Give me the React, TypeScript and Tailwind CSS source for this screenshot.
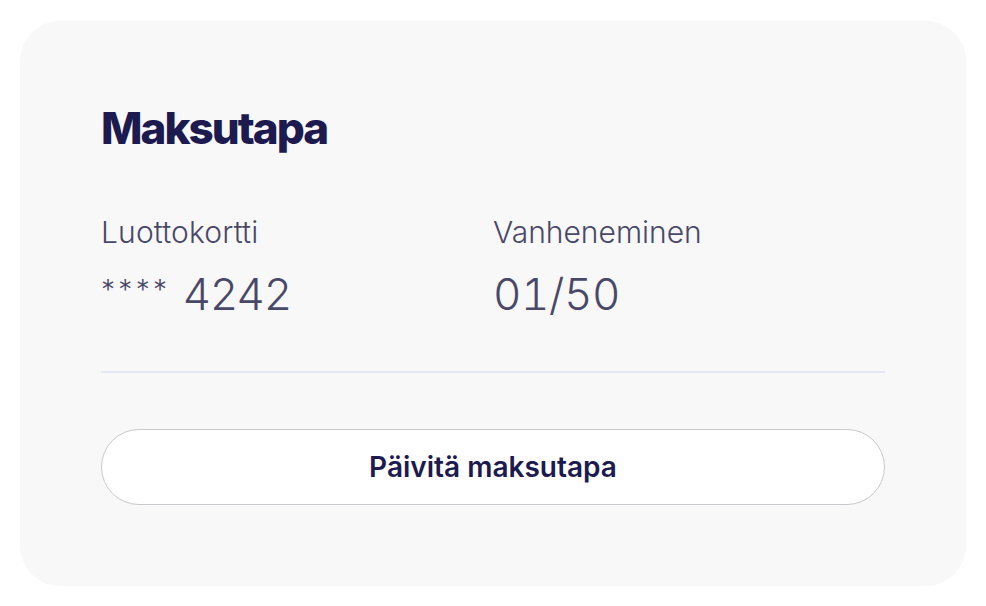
export default function App() {
  return (
    <div className="min-h-screen bg-white pl-[20px] pt-[21px]" style={{ fontFamily: 'Inter, "Noto Sans", sans-serif' }}>
      <section className="w-[946px] rounded-[40px] bg-[#f8f8f8] px-[81px] pt-[81px] pb-[81px]">
        <h2 className="text-[44px] font-extrabold leading-[53px] tracking-[-0.045em] text-[#1c1a4f]">Maksutapa</h2>

        <div className="mt-[59px] grid grid-cols-2 text-[#4a4868]">
          <div>
            <div className="text-[30px] font-light leading-[36px] tracking-[0.005em]">Luottokortti</div>
            <div className="mt-[18px] text-[44px] font-light leading-[53px]">
              <span className="align-[10px] text-[28px] leading-none tracking-[0.12em]">****</span> 4242
            </div>
          </div>
          <div>
            <div className="text-[30px] font-light leading-[36px]">Vanheneminen</div>
            <div className="mt-[18px] text-[44px] font-light leading-[53px] tabular-nums tracking-[-0.01em]">01/50</div>
          </div>
        </div>

        <hr className="mt-[50px] border-0 border-t-2 border-[#e6e9f1]" />

        <button
          type="button"
          className="mt-[56px] flex h-[76px] w-full items-center justify-center rounded-full border-[1.5px] border-[#c9c9ce] bg-white text-[28px] font-semibold text-[#1c1a4f]"
        >
          Päivitä maksutapa
        </button>
      </section>
    </div>
  );
}
